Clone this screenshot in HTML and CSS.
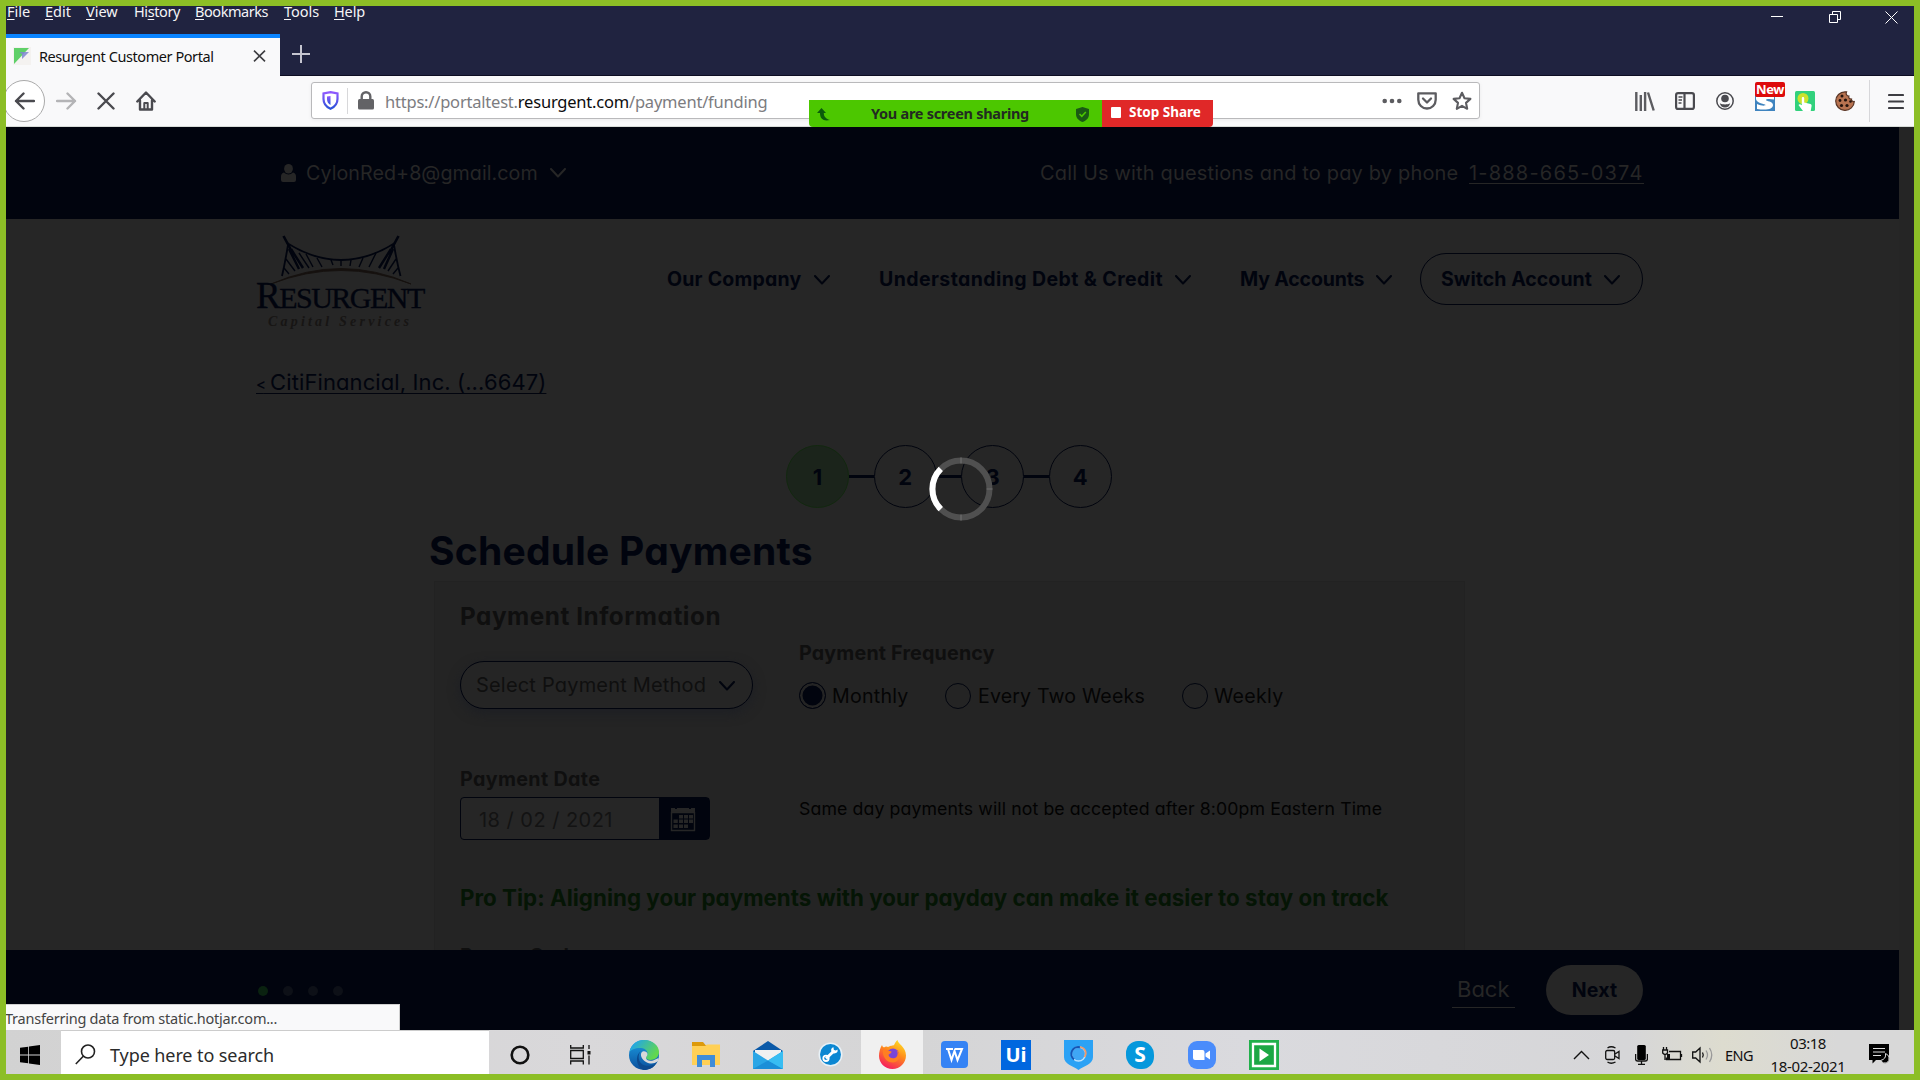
FILE: index.html
```html
<!DOCTYPE html>
<html lang="en">
<head>
<meta charset="utf-8">
<title>Resurgent Customer Portal</title>
<link rel="stylesheet" href="styles.css">
</head>
<body>
<svg class="defs" aria-hidden="true">
  <symbol id="chev" viewBox="0 0 16 10"><path d="M1 1l7 7.5L15 1" fill="none" stroke="currentColor" stroke-width="2" stroke-linecap="round" stroke-linejoin="round"/></symbol>
</svg>
<div class="screen">
  <div class="titlebar">
    <div class="menus">
      <span class="m-file"><u>F</u>ile</span><span class="m-edit"><u>E</u>dit</span><span class="m-view"><u>V</u>iew</span><span class="m-history">Hi<u>s</u>tory</span><span class="m-bookmarks"><u>B</u>ookmarks</span><span class="m-tools"><u>T</u>ools</span><span class="m-help"><u>H</u>elp</span>
      <div class="winctl">
        <svg width="12" height="12" viewBox="0 0 12 12"><path d="M0 5.5h12" stroke="#fff"/></svg>
        <svg width="12" height="12" viewBox="0 0 12 12" fill="none" stroke="#fff"><path d="M.5 3.5h8v8h-8zM3.5 3V.5h8v8H9"/></svg>
        <svg width="13" height="13" viewBox="0 0 13 13" stroke="#fff"><path d="M.5.5l12 12M12.500.5l-12 12"/></svg>
      </div>
    </div>
    <div class="tabs">
      <div class="tab">
        <svg class="fav" width="18" height="18" viewBox="0 0 18 18"><rect width="18" height="18" fill="#f4f2f0"/><path d="M1 1h15L1 17z" fill="#5fd068"/><path d="M6 5h10L9 12V7z" fill="#7f86d0" opacity=".85"/></svg>
        <span class="tab-title">Resurgent Customer Portal</span>
        <svg width="13" height="12" viewBox="0 0 13 12"><path d="M1 .7l11 10.600M12 .7L1 11.300" stroke="#3d3d40" stroke-width="1.600"/></svg>
      </div>
      <svg class="plus" width="18" height="18" viewBox="0 0 18 18"><path d="M9 0v18M0 9h18" stroke="#c5c5d0" stroke-width="2"/></svg>
    </div>
  </div>

  <div class="toolbar">
    <div class="navbtns">
      <div class="back"><svg width="21" height="18" viewBox="0 0 21 18"><path d="M20 9H2M9.500 1.500L2 9l7.500 7.500" fill="none" stroke="#4a4a4f" stroke-width="2.400" stroke-linecap="round" stroke-linejoin="round"/></svg></div>
      <svg class="fwd" width="21" height="18" viewBox="0 0 21 18"><path d="M1 9h18M11.500 1.500L19 9l-7.500 7.500" fill="none" stroke="#b4b4b6" stroke-width="2.400" stroke-linecap="round" stroke-linejoin="round"/></svg>
      <svg class="stop" width="18" height="18" viewBox="0 0 18 18"><path d="M1.500 1.500l15 15M16.500 1.500l-15 15" stroke="#4a4a4f" stroke-width="2.400" stroke-linecap="round"/></svg>
      <svg class="home" width="20" height="20" viewBox="0 0 20 20" fill="none" stroke="#4a4a4f" stroke-width="2.400" stroke-linejoin="round" stroke-linecap="round"><path d="M1.300 10.500L10 1.500l8.700 9M4 9.500v9h12v-9"/><path d="M8.300 18v-6h3.400v6" stroke-width="2"/></svg>
    </div>
    <div class="urlbar">
      <svg width="17" height="19" viewBox="0 0 17 19"><defs><linearGradient id="sg" x2="0" y2="1"><stop stop-color="#9059ff"/><stop offset="1" stop-color="#2a52d8"/></linearGradient></defs><path d="M8.500 1.200L15.500 2.500v5.500c0 5-3 8-7 9.800-4-1.800-7-4.800-7-9.800V2.500z" fill="none" stroke="url(#sg)" stroke-width="2.200"/><path d="M8.500 5v9c-2.500-1.500-3.500-3.500-3.500-6V5.600z" fill="url(#sg)"/></svg>
      <i class="usep"></i>
      <svg class="lock" width="16" height="19" viewBox="0 0 16 19"><rect y="8" width="16" height="10.500" rx="1.500" fill="#636366"/><path d="M3.700 9V5.500a4.300 4.300 0 0 1 8.600 0V9" fill="none" stroke="#636366" stroke-width="2.400"/></svg>
      <span class="url">https://portaltest.<b>resurgent.com</b>/payment/funding</span>
      <svg class="dots3" width="20" height="6" viewBox="0 0 20 6" fill="#5c5c60"><circle cx="2.700" cy="3" r="2.300"/><circle cx="10" cy="3" r="2.300"/><circle cx="17.300" cy="3" r="2.300"/></svg>
      <svg class="pocket" width="20" height="18" viewBox="0 0 20 18" fill="none" stroke="#5c5c60" stroke-width="2.300" stroke-linejoin="round" stroke-linecap="round"><path d="M1.300 1.300h17.400v6.500a8.700 8.700 0 0 1-17.400 0z"/><path d="M6 6.500l4 4 4-4"/></svg>
      <svg width="20" height="20" viewBox="0 0 20 20"><path d="M10 1.800l2.500 5.400 5.900.7-4.400 4 1.200 5.900-5.200-2.900-5.200 2.900L6 11.900l-4.400-4 5.900-.7z" fill="none" stroke="#5c5c60" stroke-width="2.100" stroke-linejoin="round"/></svg>
    </div>
    <div class="exts">
      <svg width="20" height="19" viewBox="0 0 20 19" stroke="#5c5c60" stroke-width="2.400"><path d="M1.300 0v19M5.800 3v16M10.100 0v19M13 .5L18.700 18.500"/></svg>
      <svg width="20" height="18" viewBox="0 0 20 18" fill="none" stroke="#4a4a4f" stroke-width="2.200"><rect x="1.100" y="1.100" width="17.800" height="15.800" rx="2"/><path d="M9.500 1v16"/><path d="M3.500 5h4M3.500 8h3.500M3.500 11h3" stroke-width="1.300"/></svg>
      <svg width="20" height="18" viewBox="-1 0 20 18"><circle cx="9" cy="9" r="8.200" fill="none" stroke="#4a4a4f" stroke-width="1.500"/><circle cx="9" cy="6.500" r="3.800" fill="#4a4a4f"/><path d="M3.800 11.200c2.500 1.600 8 1.600 10.400 0-.5 2.800-2.500 4.300-5.200 4.300s-4.700-1.500-5.200-4.300z" fill="#4a4a4f"/></svg>
      <div class="snag"><svg width="20" height="20" viewBox="0 0 20 20"><rect width="20" height="20" fill="#3f84bf"/><path d="M1 6h18v2.500c-5-1-8-.5-8 .500 0 1.500 7 1 7 5 0 4-6 5.500-16 4V13c4 2 8.500 2 8.500 1S1 12 1 8z" fill="#fff"/></svg><span class="new">New</span></div>
      <svg width="20" height="20" viewBox="0 0 20 20"><rect width="20" height="20" rx="1.500" fill="#32d17c"/><circle cx="8" cy="7.500" r="5.500" fill="#cbe22d"/><path d="M6.800 7c0-1.500 2.400-1.500 2.400 0v4.500l6.300 1.500c1.200.4 1.200 1.500 1 2.500l-.8 4.500H8L3.500 14c.8-1.200 2-.800 3.300.300z" fill="#fff"/></svg>
      <svg width="20" height="20" viewBox="0 0 20 20"><path d="M10 .8a9.300 9.300 0 1 0 9.300 9.700c-1.800.3-3-.9-2.800-2.500-2 .2-3.200-1.200-2.600-3-2 0-3.400-1.800-2.400-4.100z" fill="#b87350" stroke="#5a3626" stroke-width="1.200"/><g fill="#23130d"><circle cx="7" cy="5" r="1.500"/><circle cx="10.500" cy="9" r="1.600"/><circle cx="5" cy="9.500" r="1.400"/><circle cx="6.500" cy="14.500" r="1.600"/><circle cx="12" cy="14.500" r="1.600"/><circle cx="15.500" cy="10.500" r="1.300"/></g></svg>
      <i class="tsep"></i>
      <svg width="16" height="17" viewBox="0 0 16 17" stroke="#3d3d42" stroke-width="2.200" stroke-linecap="round"><path d="M1 2h14M1 8.500h14M1 15h14"/></svg>
    </div>
    <div class="share">
      <div class="sh-green">
        <svg width="13" height="13" viewBox="0 0 13 13"><path d="M4.500 0L9 5H6.800c0 3 1.500 5.500 6.200 7-6.500 1.600-10-1.200-10-7H0z" fill="#0b5b0b"/></svg>
        <span class="sh-text">You are screen sharing</span>
        <svg width="13" height="15" viewBox="0 0 13 15"><path d="M6.500 0L13 2v5c0 4-2.500 6.500-6.500 8C2.500 13.500 0 11 0 7V2z" fill="#1a5a14"/><path d="M3.500 7l2.300 2.300 4-4.300" fill="none" stroke="#4cc700" stroke-width="1.600"/></svg>
      </div>
      <div class="sh-red"><i></i><span>Stop Share</span></div>
    </div>
  </div>

  <div class="viewport">
    <div class="page">
      <header class="top">
        <svg class="user" width="15" height="18" viewBox="0 0 15 18" fill="#262626"><rect x="3.200" width="8.600" height="9.500" rx="4.200"/><path d="M3 8.500c2.500 2.500 6.500 2.500 9 0 2 .5 3 2 3 4V16a2 2 0 0 1-2 2H2a2 2 0 0 1-2-2v-3.500c0-2 1-3.500 3-4z"/></svg>
        <span class="email">CylonRed+8@gmail.com</span>
        <svg width="16" height="10"><use href="#chev"/></svg>
        <span class="call">Call Us with questions and to pay by phone</span>
        <span class="phone">1-888-665-0374</span>
      </header>
      <nav class="nav">
        <div class="logo">
          <svg width="168" height="50" viewBox="0 0 168 50" fill="none" stroke="#01040e">
            <path d="M26.500 1l7 13M141.500 1l-7 13" stroke-width="2.600"/>
            <path d="M31 10Q28 28 25 41M137 10q3 18 6.500 31" stroke-width="1.800"/>
            <path d="M30 8q54 34 108 0" stroke-width="1.800"/>
            <path d="M32 14l10 20M34 14l12 19M136 14l-9 20M134 14l-12 19" stroke-width="2.400"/>
            <path d="M29 24l9 12M27 33l5 6M139 24l-8 12M141 33l-5 6M42 18l10 15M49 19l7 13M60 23l5 9M74 25l2 5M84 26v5M94 25l-1 6M106 23l-4 9M119 18l-7 14" stroke-width="1.400"/>
            <path d="M14 49Q84 18 154 49Q84 22 14 49z" stroke="#15110e" stroke-width=".9" fill="#15110e"/>
          </svg>
          <div class="wordmark"><span>R</span>ESURGENT</div>
          <div class="tagline">Capital Services</div>
        </div>
        <span class="n1">Our Company</span><svg width="16" height="10"><use href="#chev"/></svg>
        <span class="n2">Understanding Debt &amp; Credit</span><svg width="16" height="10"><use href="#chev"/></svg>
        <span class="n3">My Accounts</span><svg width="16" height="10"><use href="#chev"/></svg>
        <div class="switch"><span class="n4">Switch Account</span><svg width="16" height="10"><use href="#chev"/></svg></div>
      </nav>
      <a class="crumb"><small>&lt;</small> CitiFinancial, Inc. (...6647)</a>
      <div class="steps"><b class="on">1</b><i></i><b>2</b><i></i><b>3</b><i></i><b>4</b></div>
      <h1>Schedule Payments</h1>
      <section class="card">
        <h2>Payment Information</h2>
        <div class="row method">
          <div class="left"><div class="select"><span>Select Payment Method</span><svg width="16" height="10"><use href="#chev"/></svg></div></div>
          <div class="right">
            <div class="label freq">Payment Frequency</div>
            <div class="radios"><i class="radio sel"></i><span class="r1">Monthly</span><i class="radio"></i><span class="r2">Every Two Weeks</span><i class="radio"></i><span class="r3">Weekly</span></div>
          </div>
        </div>
        <div class="row date">
          <div class="left">
            <div class="label">Payment Date</div>
            <div class="datebox"><span>18 / 02 / 2021</span><div class="cal"><svg width="26" height="26" viewBox="0 0 26 26"><path d="M1 2h24v5H1z" fill="#262626"/><path d="M5 0h2v3H5zM19 0h2v3h-2z" fill="#01040e"/><path d="M1.500 6.500h23v18h-23z" fill="none" stroke="#262626" stroke-width="1.400"/><path d="M9 9h4v3.500H9zM14 9h4v3.500h-4zM19 9h4v3.500h-4zM3.500 13.500h4.300V17H3.500zM9 13.500h4V17H9zM14 13.500h4V17h-4zM19 13.500h4V17h-4zM3.500 18.500h4.300V22H3.500zM9 18.500h4V22H9zM14 18.500h4V22h-4z" fill="#262626"/></svg></div></div>
          </div>
          <div class="right note">Same day payments will not be accepted after 8:00pm Eastern Time</div>
        </div>
        <div class="tip">Pro Tip: Aligning your payments with your payday can make it easier to stay on track</div>
        <div class="label promo">Promo Code</div>
      </section>
      <svg class="spinner" width="64" height="64" viewBox="-32 -32 64 64" fill="none" stroke-width="6"><circle r="28.500" stroke="#505050"/><path d="M-20.200-20.200A28.500 28.500 0 0 0-20.200 20.200" stroke="#fff"/><path d="M0-31.500v6M0 25.500v6M25.500 0h6" stroke="#6e6e6e" stroke-width="1.200"/></svg>
      <footer class="foot">
        <div class="dots"><i class="on"></i><i></i><i></i><i></i></div>
        <span class="backlink">Back</span>
        <span class="next">Next</span>
      </footer>
      <div class="status">Transferring data from static.hotjar.com...</div>
    </div>
    <div class="scroll"></div>
  </div>

  <div class="taskbar">
    <div class="start"><svg width="20" height="20" viewBox="0 0 20 20"><path d="M0 2.800l8.200-1.100v7.800H0zM9 1.600L20 0v9.500H9zM0 10.400h8.200v7.900L0 17.200zM9 10.400h11V20L9 18.400z"/></svg></div>
    <div class="search"><svg width="21" height="21" viewBox="0 0 21 21" fill="none" stroke="#222" stroke-width="1.600"><circle cx="13" cy="7.500" r="6.500"/><path d="M8.500 12L.8 20"/></svg><span>Type here to search</span></div>
    <div class="apps">
      <div class="app"><svg width="20" height="20" viewBox="0 0 20 20"><circle cx="10" cy="10" r="8.300" fill="none" stroke="#111" stroke-width="2.600"/></svg></div>
      <div class="app tv"><svg width="21" height="20" viewBox="0 0 21 20" fill="none" stroke="#111" stroke-width="1.300"><path d="M.7 0v3h12.600V0M.7 5.500h12.600v8H.7zM.7 19.500v-3.500h12.600v3.500M19 0v4M19 10.500v9"/><path d="M17.500 6h3v3.500h-3z" fill="#111" stroke="none"/></svg></div>
      <div class="app"><svg width="30" height="30" viewBox="0 0 30 30"><defs><linearGradient id="e1" x2="1" y2=".5"><stop offset=".2" stop-color="#25a8e0"/><stop offset="1" stop-color="#62d84e"/></linearGradient><linearGradient id="e2" x2="0" y2="1"><stop stop-color="#1b9de2"/><stop offset="1" stop-color="#0b4f9c"/></linearGradient></defs><circle cx="15" cy="15" r="15" fill="url(#e2)"/><path d="M.5 12C2 4 8 0 15 0c9 0 15 6 15 12 0 5-4 8-8.500 8-3 0-4.500-1-4.500-2.500 0-1 1.500-1.500 1.500-4C18.500 10 15 8 11 8 6 8 2 10 .5 12z" fill="url(#e1)"/><path d="M12 11c-4 3-4 17 10 14.500 2.500-.5 4.500-2 6-3.500C25 28 20 30 15 30 8 28 5 16 12 11z" fill="#0c4a8f"/><path d="M12.500 12.500c2-2.500 6-.5 6 1.500 0 2-1.500 2.500-1.500 4 0 2 3 3.500 7 2.500l5.500-2.500c.3 1.500-.5 3-1 3.500-3 2-7 3-11.500.5-4.500-2.500-6-7-4.500-9.500z" fill="#d8d8da"/></svg></div>
      <div class="app"><svg width="30" height="26" viewBox="0 0 30 26"><path d="M1 0h11l2.500 3H28v5H1z" fill="#dd9a0b"/><path d="M1 4h13l2-1.500h13V23H1z" fill="#ffd056"/><path d="M6 25V13h18v12h-5v-7h-8v7z" fill="#3f8dd8"/></svg></div>
      <div class="app"><svg width="30" height="28" viewBox="0 0 30 28"><path d="M0 10L15 0l15 10v5H0z" fill="#0a59a8"/><path d="M2 9h26v12H2z" fill="#f1f1f1"/><path d="M0 10l15 9.500L30 10v18H0z" fill="#2aa6e6"/><path d="M0 28l15-8.500L30 28z" fill="#1b8fd8"/><path d="M30 10v18L15 19.500z" fill="#38bdf2"/></svg></div>
      <div class="app"><svg width="25" height="25" viewBox="0 0 25 25"><circle cx="12.500" cy="12.500" r="12" fill="#e8f1f7"/><circle cx="12.500" cy="12.500" r="10.500" fill="#0c87d2"/><path d="M8 16.500l8.500-8" stroke="#fff" stroke-width="3"/><circle cx="8" cy="16.300" r="2.700" fill="none" stroke="#fff" stroke-width="1.800"/><path d="M19.500 7.500a3.200 3.200 0 1 1-4-2.300l.3 2.800 2 .5z" fill="#fff"/></svg></div>
      <div class="app active"><svg width="29" height="29" viewBox="0 0 29 29"><defs><linearGradient id="fx" x1=".8" x2=".3" y2="1"><stop stop-color="#ffe226"/><stop offset=".45" stop-color="#ff8a1c"/><stop offset="1" stop-color="#f5195f"/></linearGradient></defs><path d="M4 5c.5 1.500 1 2 2 2.500C8 6 9 6.300 10 7c3-2 5-1 6-2 1-1.500 1.500-3.500 3.500-5 .5 4 8.500 7 8.500 15.500C28 23 22 29 14.500 29S1 23 1 16C1 12 2 8 4 5z" fill="url(#fx)"/><circle cx="15" cy="14.500" r="6" fill="#7a45d8"/><path d="M5 10c4-1 5 1 8.500 1.500C14 13 11 14 10.500 15c1 4 6 4 8 2 1.500-2 1.500-5 0-7 5 3 4 12-3.500 12.500C8 22.500 4 16 5 10z" fill="#ff7f22"/></svg></div>
      <div class="app"><svg width="27" height="28" viewBox="0 0 27 28"><rect width="27" height="27" rx="4" fill="#3583f4"/><path d="M5 8h7M7 8l3.500 11 3-9 3 9L21 8h-7" fill="none" stroke="#fff" stroke-width="2"/></svg></div>
      <div class="app"><div class="ui">Ui</div></div>
      <div class="app"><svg width="29" height="30" viewBox="0 0 29 30"><path d="M0 0h29v17c0 7-9 9-14.500 13C9 26 0 24 0 17z" fill="#2ba2f5"/><circle cx="14.500" cy="14" r="7" fill="#3fa6f5" stroke="#bde4ff" stroke-width="1.300"/><path d="M10 19.500A7 7 0 0 1 16 7.200" fill="none" stroke="#1554b5" stroke-width="2"/><path d="M16 7c5 .8 7.500 5.500 4.500 10" fill="none" stroke="#f09a6c" stroke-width="1.700"/></svg></div>
      <div class="app"><div class="skype">S</div></div>
      <div class="app"><svg width="28" height="28" viewBox="0 0 28 28"><rect width="28" height="28" rx="9" fill="#4a8cfb"/><path d="M5 9h9.500a2 2 0 0 1 2 2v8H7a2 2 0 0 1-2-2zM17.500 12.500L22 9.500v9l-4.500-3z" fill="#fff"/></svg></div>
      <div class="app"><svg width="30" height="30" viewBox="0 0 30 30"><path d="M0 0h30v30H0z" fill="#21b04b"/><path d="M4 4h22v22H4z" fill="#1ca744" stroke="#fff" stroke-width="2.300"/><path d="M10.500 8.500L20 15l-9.500 6.500z" fill="#fff"/></svg></div>
    </div>
    <div class="tray">
      <svg width="17" height="10" viewBox="0 0 17 10"><path d="M1 9l7.500-7.500L16 9" fill="none" stroke="#111" stroke-width="1.400"/></svg>
      <svg class="t-cam" width="15" height="18" viewBox="0 0 15 18" fill="none" stroke="#111" stroke-width="1.300"><path d="M2.500 2q3.500-2.500 8 0M2.500 16q3.500 2.500 8 0"/><rect x=".7" y="4.500" width="9" height="9" rx="1.500"/><path d="M10 8l4-2.500v7L10 10"/></svg>
      <svg class="t-mic" width="13" height="20" viewBox="0 0 13 20"><rect x="2.200" width="8.600" height="15" rx="1.500"/><path d="M.6 9v5q0 2 2 2h7.800q2 0 2-2V9M6.500 16v3M3 19.300h7" fill="none" stroke="#111" stroke-width="1.300"/></svg>
      <svg class="t-bat" width="21" height="15" viewBox="0 0 21 15" fill="none" stroke="#111" stroke-width="1.300"><path d="M7 4.500h11.500v8H4.500v-2M19.500 7v3M1.500 0v3M4.500 0v3M.7 3h4.800v3q-2.400 3-4.800 0zM3 7.500V13"/><path d="M5 7h3v5H5z" fill="#111" stroke="none"/></svg>
      <svg class="t-vol" width="21" height="18" viewBox="0 0 21 18" fill="none" stroke="#111" stroke-width="1.300"><path d="M.7 6h3L8 2v14l-4.300-4h-3zM10.500 6.500q1.500 2.500 0 5"/><path d="M14 4.500q3 4.500 0 9M17.500 2q4.500 7 0 14" stroke="#999"/></svg>
      <span class="eng">ENG</span>
      <div class="clock"><span class="time">03:18</span><span class="day">18-02-2021</span></div>
      <svg width="21" height="21" viewBox="0 0 21 21"><path d="M0 0h20v16H7l-3.500 3.500V16H0z"/><path d="M4 4.500h12M4 8h12M4 11.500h8" stroke="#ddd" stroke-width="1.200"/><path d="M16.500 9.500q1 5.500-5 7 2.500 3.500 6 2.500 3.500-2 2.500-6-.8-2.500-3.500-3.500z" stroke="#ddd"/></svg>
    </div>
  </div>
</div>
</body>
</html>
```
FILE: styles.css
```css
* { box-sizing: border-box; }
body { margin: 0; background: #8cbe26; }
svg { display: block; flex: none; }
span { white-space: pre; flex: none; }
i { display: block; flex: none; }
.defs { position: absolute; width: 0; height: 0; }

.screen {
  width: 1920px; height: 1080px; border: 6px solid #8cbe26; overflow: hidden;
  display: flex; flex-direction: column;
  font-family: "Noto Sans", "Open Sans", sans-serif;
}

/* title bar */
.titlebar { height: 70px; background: #202340; box-shadow: inset 0 -1px #0d0d22; flex: none; }
.menus { display: flex; height: 28px; padding-left: 1px; color: #f4f4f6; font-size: 14.5px; line-height: 10px; }
.menus u { text-decoration: underline; text-underline-offset: 2px; text-decoration-skip-ink: none; }
.m-file { width: 38px; }
.m-edit { width: 41px; }
.m-view { width: 48px; }
.m-history { width: 61px; letter-spacing: -.4px; }
.m-bookmarks { width: 89px; letter-spacing: -.45px; }
.m-tools { width: 50px; }
.m-help { width: 40px; letter-spacing: -.15px; }
.winctl { margin-left: auto; padding: 5px 16px 0 0; display: flex; gap: 45px; }
.winctl svg:nth-child(2) { margin-left: 1px; margin-right: -1px; }
.tabs { display: flex; height: 42px; }
.tab { width: 274px; height: 42px; background: #f9f9fa; border-top: 4px solid #0a84ff; display: flex; align-items: center; padding: 0 0 3px 7px; }
.tab-title { width: 223px; margin-left: 8px; font-size: 14.5px; letter-spacing: -.43px; color: #111; }
.tab svg:last-child { margin-left: -9px; }
.plus { margin: 11px 0 0 12px; }

/* toolbar */
.toolbar { height: 51px; background: #f9f9fa; border-bottom: 1px solid #d8dcd8; display: flex; position: relative; flex: none; }
.navbtns { width: 305px; display: flex; align-items: center; }
.back { width: 42px; height: 42px; margin-left: -3px; border: 1px solid #aaa; border-radius: 50%; background: #fff; display: flex; align-items: center; justify-content: center; }
.fwd { margin-left: 11px; }
.stop { margin-left: 20px; }
.home { margin-left: 21px; }
.urlbar { width: 1169px; height: 37px; margin-top: 6px; border: 1px solid #b9b9bb; border-radius: 3px; background: #fff; display: flex; align-items: center; padding-left: 10px; box-shadow: 0 1px 4px rgba(0,0,0,.06); }
.usep { width: 1px; height: 26px; background: #d8d8da; margin: 0 10px 0 8px; }
.url { width: 997px; margin-left: 11px; padding-top: 1px; font-size: 16.5px; letter-spacing: -.21px; color: #7c7c80; }
.url b { font-weight: 400; color: #0c0c0d; }
.pocket { margin: 0 15px 0 15px; }
.exts { display: flex; align-items: center; gap: 20px; margin-left: 155px; }
.snag { position: relative; }
.new { position: absolute; left: 0; top: -9px; width: 30px; height: 15px; background: #dd0b0b; border-radius: 2px; color: #fff; font: 700 13px/14px "Noto Sans", sans-serif; letter-spacing: -.4px; text-align: center; }
.tsep { width: 1px; height: 42px; background: #d7d7da; margin: 0 -2px 0 -6px; }
.share { position: absolute; left: 803px; top: 24px; height: 27px; display: flex; border-radius: 0 0 4px 4px; overflow: hidden; }
.sh-green { width: 293px; background: #4cc700; display: flex; align-items: center; padding: 1px 0 0 8px; color: #222a22; }
.sh-text { width: 205px; margin: -2px 0 0 41px; font-size: 14.5px; font-weight: 700; letter-spacing: -.28px; }
.sh-red { width: 111px; background: #e02828; color: #fff; display: flex; align-items: center; padding: 0 0 3px 9px; font-size: 13.5px; font-weight: 700; }
.sh-red i { width: 10px; height: 11px; background: #fff; border-radius: 1px; margin-right: 8px; }

/* page */
.viewport { height: 903px; display: flex; background: #262626; flex: none; color: #01040e; font-family: Inter, sans-serif; font-feature-settings: "cv11"; }
.page { width: 1893px; position: relative; display: flex; flex-direction: column; overflow: hidden; }
.scroll { width: 15px; background: #252525; }
.top { height: 92px; background: #01040e; color: #262626; display: flex; align-items: center; padding-left: 275px; font-size: 19px; flex: none; }
.email { width: 244px; margin-left: 10px; font-size: 19.7px; letter-spacing: .05px; }
.call { width: 429px; margin-left: 474px; font-size: 20px; letter-spacing: .16px; }
.phone { width: 175px; height: 22px; line-height: 22px; font-size: 20px; letter-spacing: 1.190px; border-bottom: 1px solid #262626; white-space: nowrap; }
.nav { height: 120px; display: flex; align-items: center; padding-left: 251px; font-size: 19.500px; font-weight: 700; flex: none; }
.nav svg { margin-top: 2px; }
.logo { width: 410px; height: 92px; margin-top: 4px; flex: none; font-family: "Liberation Serif", serif; font-weight: 400; }
.nav .logo svg { margin-top: 0; }
.wordmark { font-size: 30px; line-height: 28px; margin: -1px 0 0 -1px; width: 170px; letter-spacing: -1.500px; white-space: nowrap; -webkit-text-stroke: .3px #01040e; }
.wordmark span { font-size: 37px; line-height: 20px; }
.tagline { font-size: 14px; line-height: 14px; margin: 3px 0 0 11px; font-weight: 700; font-style: italic; letter-spacing: 3.200px; color: #171514; white-space: nowrap; }
.n1 { width: 147px; letter-spacing: .23px; }
.n2 { width: 296px; margin-left: 49px; letter-spacing: .41px; }
.n3 { width: 136px; margin-left: 49px; letter-spacing: -.15px; }
.switch { width: 223px; height: 52px; margin-left: 28px; border: 1px solid #01040e; border-radius: 26px; display: flex; align-items: center; padding-left: 20px; flex: none; }
.n4 { width: 163px; letter-spacing: .05px; }
.crumb { align-self: flex-start; height: 30px; margin: 28px 0 0 250px; width: 291px; white-space: nowrap; font-size: 22px; line-height: 30px; letter-spacing: .1px; text-decoration: underline; text-decoration-thickness: 1px; text-underline-offset: 3px; text-decoration-skip-ink: none; }
.crumb small { font-size: 15px; line-height: 10px; letter-spacing: -2.200px; font-weight: 500; }
.steps { display: flex; align-items: center; margin: 48px 0 0 780px; height: 63px; font-size: 22px; flex: none; }
.steps b { width: 63px; height: 63px; border: 1px solid #01040e; border-radius: 50%; display: flex; align-items: center; justify-content: center; }
.steps .on { background: #1b241b; border-color: #12280f; }
.steps i { width: 24.600px; height: 3px; background: #01040e; }
h1 { margin: 20px 0 0 423px; font-size: 39px; line-height: 46px; letter-spacing: .23px; font-weight: 700; }
.card { margin: 7px 0 0 428px; width: 1031px; height: 369px; border: 1px solid #222; border-bottom: 0; background: #242424; padding: 19px 0 0 25px; overflow: hidden; flex: none; }
h2 { margin: 0; font-size: 24.300px; line-height: 31px; letter-spacing: .53px; color: #0f0f0f; }
.row { display: flex; }
.left { width: 339px; flex: none; }
.method { height: 125px; margin-top: 11px; }
.select { width: 293px; height: 48px; margin-top: 18px; border: 1px solid #01040e; border-radius: 24px; display: flex; align-items: center; padding-left: 15px; background: #252525; box-shadow: 0 4px 12px #1d1f24; font-size: 20px; letter-spacing: .19px; color: #0f0f0f; }
.select span { width: 243px; }
.select svg { color: #01040e; margin-top: 1px; }
.label { font-size: 19.700px; font-weight: 700; line-height: 20px; letter-spacing: .35px; color: #0f0f0f; }
.freq { letter-spacing: .17px; }
.radios { display: flex; align-items: center; height: 27px; margin-top: 19px; font-size: 19.600px; color: #050505; }
.radio { width: 26px; height: 26px; border: 1px solid #01040e; border-radius: 50%; }
.radio.sel { width: 27px; height: 27px; background: #01040e; box-shadow: inset 0 0 0 2.500px #242424; }
.r1 { width: 113px; margin-left: 6px; letter-spacing: .25px; }
.r2 { width: 204px; margin-left: 7px; letter-spacing: .15px; }
.r3 { margin-left: 6px; letter-spacing: .3px; }
.date { height: 116px; }
.date .label { padding-top: 1px; }
.datebox { width: 250px; height: 43px; margin-top: 8px; border: 1px solid #01040e; border-radius: 4px; display: flex; align-items: center; font-size: 20px; letter-spacing: .47px; color: #131313; background: #262626; }
.datebox span { width: 198px; padding: 3px 0 0 18px; }
.cal { flex: 1; height: 41px; background: #01040e; display: flex; align-items: center; justify-content: center; padding-right: 2px; }
.note { padding-top: 31px; font-size: 17.700px; line-height: 20px; letter-spacing: .11px; color: #020202; }
.tip { font-size: 22.300px; line-height: 28px; font-weight: 700; letter-spacing: .04px; color: #051505; white-space: nowrap; }
.promo { margin-top: 34px; }
.spinner { position: absolute; left: 922.500px; top: 329.500px; }
.foot { height: 80px; background: #01040e; display: flex; align-items: center; padding-left: 252px; flex: none; }
.dots { display: flex; gap: 15px; width: 1194px; padding-top: 1px; }
.dots i { width: 10px; height: 10px; border-radius: 50%; background: #0d1017; }
.dots .on { background: #0a2210; }
.backlink { width: 63px; height: 37px; margin-top: -1px; padding-left: 5px; line-height: 36px; border-bottom: 1px solid #262626; color: #262626; font-size: 22px; letter-spacing: 0; }
.next { width: 97px; height: 50px; margin-left: 31px; border-radius: 25px; background: #262626; font-size: 19.500px; font-weight: 700; line-height: 51px; text-align: center; letter-spacing: .2px; }
.status { position: absolute; left: -1px; bottom: 0; width: 395px; height: 26px; background: #f9f9fa; border-top: 1px solid #d0d0d0; border-right: 1px solid #d0d0d0; font: 14.5px/27px "Noto Sans", sans-serif; font-feature-settings: normal; letter-spacing: -.23px; color: #444; white-space: nowrap; }

/* taskbar */
.taskbar { height: 44px; display: flex; background: linear-gradient(90deg, #d2d2d2, #d9d8da 30%, #d5d5d6 48%, #dadade 65%, #d6d6d8 85%, #dddccf 90%, #d8d8d8 96%); color: #111; flex: none; }
.start { width: 55px; display: flex; align-items: center; padding: 5px 0 0 14px; }
.search { width: 428px; background: #fff; border-top: 1px solid #ccc; display: flex; align-items: center; padding: 4px 0 0 14px; font-size: 18px; letter-spacing: -.09px; color: #2b2b2b; }
.search span { margin-left: 14px; }
.apps { display: flex; }
.app { width: 62px; height: 44px; display: flex; align-items: center; justify-content: center; padding-top: 5px; }
.tv { padding-right: 4px; }
.active { background: #f0f0f0; }
.ui { width: 30px; height: 30px; background: #0067df; color: #fff; font: 700 20px/29px "Noto Sans", sans-serif; text-align: center; }
.skype { width: 28px; height: 28px; border-radius: 12px 14px 12px 14px; background: #0598dc; color: #fff; font: 700 21px/27px "Noto Sans", sans-serif; text-align: center; }
.tray { margin-left: auto; display: flex; align-items: center; padding: 5px 24px 0 0; font-size: 15px; }
.t-cam { margin-left: 15px; }
.t-mic { margin-left: 15px; }
.t-bat { margin-left: 14px; }
.t-vol { margin-left: 9px; }
.eng { width: 27px; margin-left: 12px; margin-right: 1px; font-size: 14.5px; letter-spacing: -.5px; }
.clock { width: 116px; display: flex; flex-direction: column; align-items: center; line-height: 23px; padding: 0 24px 0 18px; margin-top: 1px; }
.time { letter-spacing: -.5px; }
.day { letter-spacing: -.35px; }
```
